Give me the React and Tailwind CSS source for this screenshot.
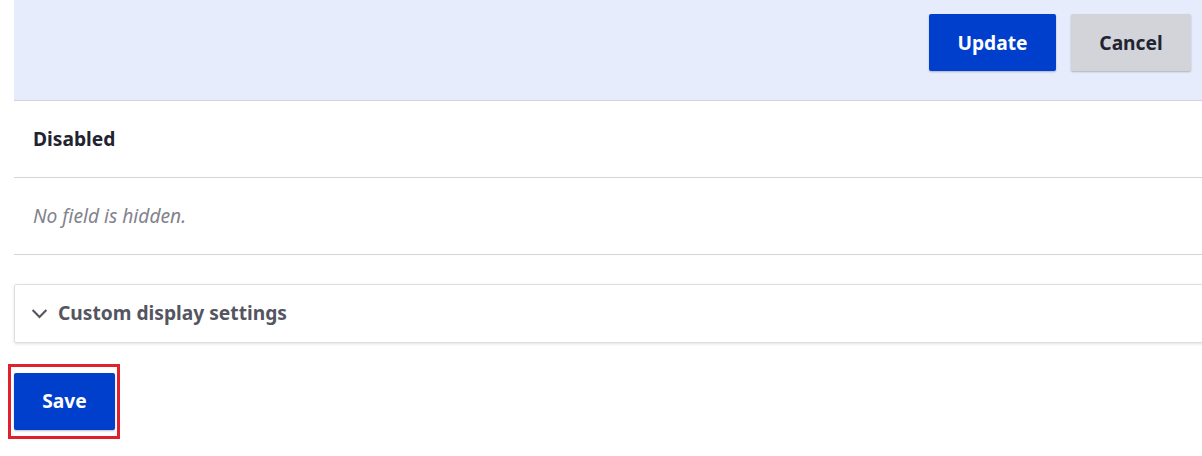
export default function App() {
  return (
    <div className="w-[1202px] h-[456px] overflow-hidden bg-white" style={{ fontFamily: '"Noto Sans", sans-serif' }}>
      <div className="pl-[14px]">
        <div className="h-[101px] bg-[#e6ecfc] border-b border-[#d3d4d9] flex items-start justify-end pt-[14px] pr-[11px] gap-[15px]">
          <button className="h-[57px] w-[127px] pt-[2px] bg-[#003ecc] text-white font-bold text-[19.2px] rounded-[2px] shadow-[0_1px_2px_rgba(0,0,0,0.25)]">Update</button>
          <button className="h-[57px] w-[120px] pt-[2px] bg-[#d3d4d9] text-[#222330] font-bold text-[19.2px] rounded-[2px] shadow-[0_1px_2px_rgba(0,0,0,0.25)]">Cancel</button>
        </div>
        <div className="h-[77px] border-b border-[#d3d4d9] flex items-center pl-[19px]">
          <span className="font-bold text-[19.2px] text-[#222330]">Disabled</span>
        </div>
        <div className="h-[77px] border-b border-[#d3d4d9] flex items-center pl-[19px]">
          <span className="italic text-[19.2px] text-[#82828c]">No field is hidden.</span>
        </div>
        <div className="mt-[29px] mr-[-10px] h-[59px] border border-[#dedfe4] rounded-[2px] shadow-[0_1px_3px_rgba(0,0,0,0.12)] flex items-center pl-[16px]">
          <svg width="17" height="17" viewBox="0 0 16 16" className="mr-[10px]">
            <path d="M1.5 4.8 L8 11.2 L14.5 4.8" fill="none" stroke="#545560" strokeWidth="2" />
          </svg>
          <span className="font-bold text-[19.2px] text-[#545560]">Custom display settings</span>
        </div>
        <div className="relative mt-[30px]">
          <div className="absolute left-[-6px] top-[-9px] w-[112px] h-[75px] border-[3px] border-[#e0202b]" />
          <button className="relative h-[57px] w-[101px] bg-[#003ecc] text-white font-bold text-[19.2px] rounded-[2px] shadow-[0_1px_2px_rgba(0,0,0,0.25)]">Save</button>
        </div>
      </div>
    </div>
  );
}
